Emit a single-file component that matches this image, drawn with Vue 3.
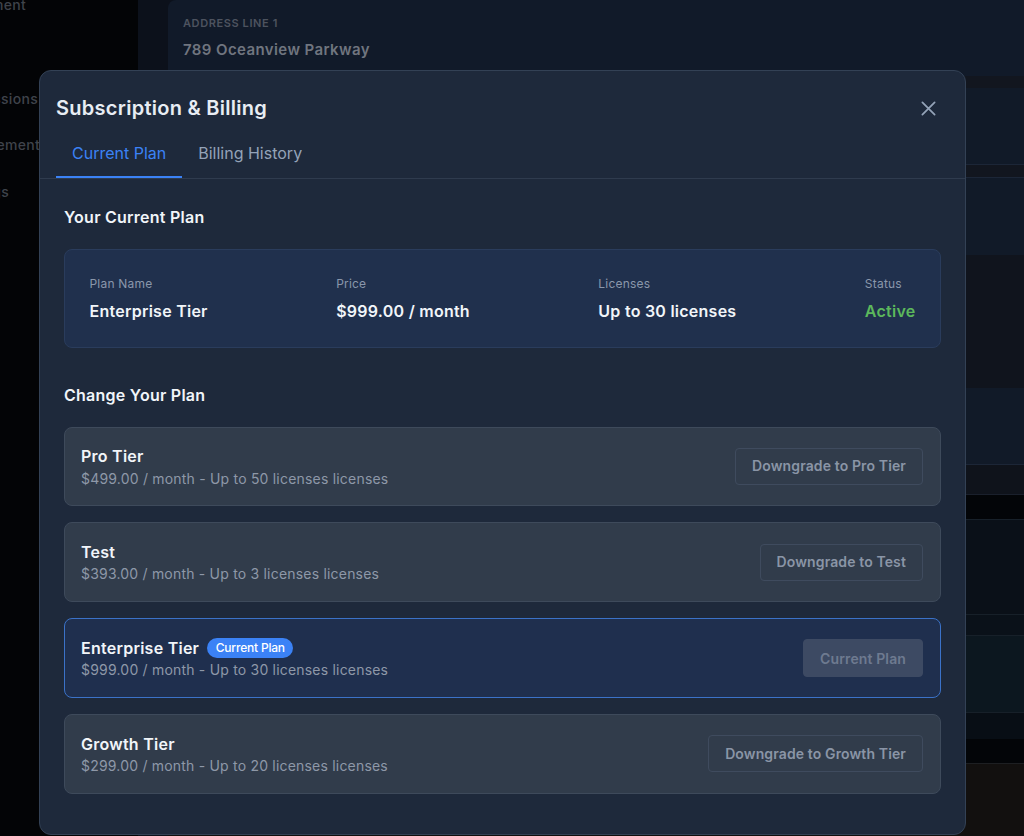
<script setup>
const summary = [
  { label: 'Plan Name', value: 'Enterprise Tier' },
  { label: 'Price', value: '$999.00 / month' },
  { label: 'Licenses', value: 'Up to 30 licenses' },
  { label: 'Status', value: 'Active', active: true },
]
const plans = [
  { name: 'Pro Tier', detail: '$499.00 / month - Up to 50 licenses licenses', action: 'Downgrade to Pro Tier' },
  { name: 'Test', detail: '$393.00 / month - Up to 3 licenses licenses', action: 'Downgrade to Test' },
  { name: 'Enterprise Tier', detail: '$999.00 / month - Up to 30 licenses licenses', action: 'Current Plan', current: true },
  { name: 'Growth Tier', detail: '$299.00 / month - Up to 20 licenses licenses', action: 'Downgrade to Growth Tier' },
]
const bands = ['b1', 'b2', 'b3', 'b4', 'b5', 'b6', 'b7', 'b8', 'b9', 'b10', 'b11', 'b12', 'b13']
</script>

<template>
  <div class="page">
    <aside class="sidebar">
      <span class="nav n1">Management</span>
      <span class="nav n2">Permissions</span>
      <span class="nav n3">Management</span>
      <span class="nav n4">Settings</span>
    </aside>
    <main class="main">
      <div class="content">
        <div class="address">
          <div class="addr-label">ADDRESS LINE 1</div>
          <div class="addr-value">789 Oceanview Parkway</div>
        </div>
        <div v-for="b in bands" :key="b" class="band" :class="b"></div>
      </div>
    </main>

    <section class="modal">
      <header class="head">
        <h2 class="title">Subscription &amp; Billing</h2>
        <svg class="close" viewBox="0 0 24 24" fill="none" stroke="currentColor" stroke-width="2" stroke-linecap="round">
          <path d="M5 5l14 14M19 5L5 19" />
        </svg>
      </header>
      <nav class="tabs">
        <span class="tab on">Current Plan</span>
        <span class="tab">Billing History</span>
      </nav>
      <div class="body">
        <h3 class="sec first">Your Current Plan</h3>
        <div class="summary">
          <div v-for="s in summary" :key="s.label" class="cell">
            <div class="cell-label">{{ s.label }}</div>
            <div class="cell-value" :class="{ active: s.active }">{{ s.value }}</div>
          </div>
        </div>
        <h3 class="sec second">Change Your Plan</h3>
        <div class="plans">
          <div v-for="p in plans" :key="p.name" class="plan" :class="{ current: p.current }">
            <div class="info">
              <div class="name">
                {{ p.name }}
                <span v-if="p.current" class="badge">Current Plan</span>
              </div>
              <div class="detail">{{ p.detail }}</div>
            </div>
            <button class="btn" :class="{ disabled: p.current }">{{ p.action }}</button>
          </div>
        </div>
      </div>
    </section>
  </div>
</template>

<style scoped>
.page {
  position: relative;
  display: flex;
  width: 1024px;
  height: 836px;
  overflow: hidden;
  background: #0c111b;
  font-family: Inter, "Liberation Sans", sans-serif;
}
.sidebar {
  position: relative;
  width: 138px;
  flex: none;
  background: #030406;
}
.nav {
  position: absolute;
  font-size: 14px;
  line-height: 20px;
  color: #3f434b;
  white-space: nowrap;
  font-weight: 500;
  letter-spacing: 0.3px;
}
.n1 { top: -5px; right: 112px; }
.n2 { top: 89px; right: 100px; }
.n3 { top: 135px; right: 98px; }
.n4 { top: 182px; right: 129px; }
.main {
  flex: 1;
  padding-left: 30px;
  background: #0c111b;
}
.content { display: flex; flex-direction: column; }
.address {
  height: 76px;
  padding: 16px 15px 0;
  box-sizing: border-box;
  background: #111a29;
  border-radius: 8px 0 0 0;
}
.addr-label {
  font-size: 11px;
  line-height: 14px;
  font-weight: 600;
  letter-spacing: 0.6px;
  color: #4d535f;
}
.addr-value {
  margin-top: 9px;
  font-size: 15px;
  line-height: 22px;
  font-weight: 600;
  letter-spacing: 0.4px;
  color: #70757f;
}
.band { flex: none; }
.b1 { height: 12px; background: #12161f; }
.b2 { height: 77px; background: #111a28; border-bottom: 1px solid #1c2637; box-sizing: border-box; }
.b3 { height: 13px; background: #12161f; border-bottom: 1px solid #1c2637; box-sizing: border-box; }
.b4 { height: 77px; background: #111a28; }
.b5 { height: 133px; background: #10141d; }
.b6 { height: 77px; background: #111a28; border-bottom: 1px solid #1c2637; box-sizing: border-box; }
.b7 { height: 30px; background: #0f131b; border-bottom: 1px solid #1a202c; box-sizing: border-box; }
.b8 { height: 25px; background: #030508; border-bottom: 1px solid #172029; box-sizing: border-box; }
.b9 { height: 95px; background: #0a1018; border-bottom: 1px solid #172029; box-sizing: border-box; }
.b10 { height: 21px; background: #0a1119; border-bottom: 1px solid #172029; box-sizing: border-box; }
.b11 { height: 77px; background: #0c171f; border-bottom: 1px solid #172029; box-sizing: border-box; }
.b12 { height: 26px; background: #080e15; }
.b13 { height: 25px; background: #030508; border-bottom: 1px solid #1d1f22; box-sizing: border-box; }
.content::after {
  content: "";
  height: 73px;
  background: #12100f;
}
.modal {
  position: absolute;
  left: 39px;
  top: 70px;
  width: 927px;
  height: 765px;
  box-sizing: border-box;
  background: #1e293b;
  border: 1px solid #334155;
  border-radius: 12px;
  color: #f1f5f9;
}
.head {
  display: flex;
  justify-content: space-between;
  align-items: center;
  height: 56px;
  padding: 18px 26px 0 16px;
  box-sizing: border-box;
}
.title {
  margin: 0;
  font-size: 20px;
  line-height: 28px;
  font-weight: 600;
  letter-spacing: 0.27px;
  color: #e8edf4;
}
.close {
  width: 21px;
  height: 21px;
  color: #94a3b8;
}
.tabs {
  display: flex;
  height: 51px;
  margin-top: 1px;
  padding-left: 16px;
  box-sizing: border-box;
  border-bottom: 1px solid #2f3b4e;
}
.tab {
  padding: 0 16px;
  height: 50px;
  line-height: 50px;
  box-sizing: border-box;
  font-size: 16px;
  color: #94a3b8;
}
.on {
  color: #3b82f6;
  border-bottom: 2px solid #3b82f6;
}
.body { padding: 0 24px; }
.sec {
  margin: 0;
  font-size: 16px;
  line-height: 24px;
  font-weight: 600;
  letter-spacing: 0.25px;
  color: #f1f5f9;
}
.first { padding-top: 26px; }
.second { margin-top: 35px; }
.summary {
  display: flex;
  justify-content: space-between;
  margin-top: 20px;
  height: 99px;
  padding: 25px 24.5px 0;
  box-sizing: border-box;
  background: #20304d;
  border: 1px solid #2a3c5c;
  border-radius: 8px;
}
.cell-label {
  font-size: 12px;
  line-height: 18px;
  letter-spacing: 0.2px;
  color: #8a97ab;
}
.cell-value {
  margin-top: 6px;
  font-size: 16px;
  line-height: 24px;
  font-weight: 600;
  letter-spacing: 0.25px;
  color: #f1f5f9;
}
.active { color: #5cb85c; }
.plans {
  display: flex;
  flex-direction: column;
  gap: 16px;
  margin-top: 19.6px;
}
.plan {
  display: flex;
  justify-content: space-between;
  align-items: center;
  height: 79.8px;
  padding: 0 17px 0 16px;
  box-sizing: border-box;
  background: #313c4b;
  border: 1px solid #3e4a5b;
  border-radius: 8px;
}
.plan.current {
  background: #1f2f4e;
  border-color: #3b72c8;
}
.name {
  display: flex;
  align-items: center;
  gap: 8px;
  font-size: 16px;
  line-height: 24px;
  font-weight: 600;
  letter-spacing: 0.25px;
  color: #f1f5f9;
}
.badge {
  padding: 0 8.5px;
  height: 20px;
  line-height: 20px;
  border-radius: 10px;
  background: #3b82f6;
  color: #fff;
  font-size: 12px;
  font-weight: 500;
  letter-spacing: -0.2px;
}
.detail {
  margin-top: 0.2px;
  font-size: 14px;
  line-height: 20px;
  letter-spacing: 0.2px;
  color: #8e98a8;
}
.btn {
  padding: 0 16px 1px;
  height: 37px;
  box-sizing: border-box;
  background: transparent;
  border: 1px solid #3f4b5e;
  border-radius: 4px;
  font-family: inherit;
  font-size: 14px;
  font-weight: 600;
  letter-spacing: 0.12px;
  color: #8a95a6;
}
.btn.disabled {
  height: 38px;
  padding-bottom: 0;
  background: #3d4a63;
  border-color: #3d4a63;
  color: #6e7a90;
}
</style>
